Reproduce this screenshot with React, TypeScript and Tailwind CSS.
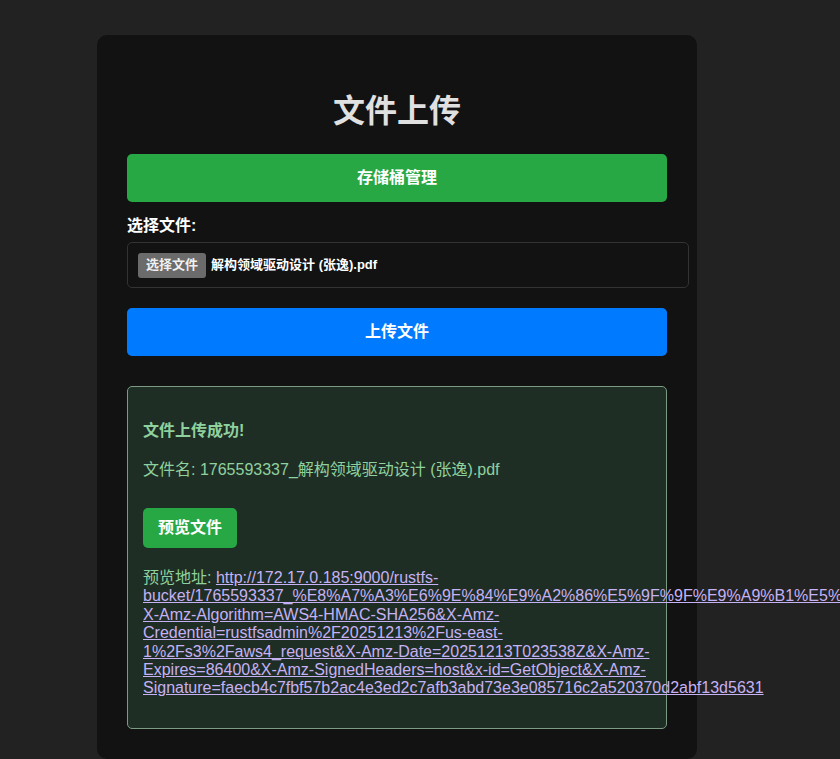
import React from 'react';

const url =
  'http://172.17.0.185:9000/rustfs-bucket/1765593337_%E8%A7%A3%E6%9E%84%E9%A2%86%E5%9F%9F%E9%A9%B1%E5%8A%A8%E8%AE%BE%E8%AE%A1%20%28%E5%BC%A0%E9%80%B8%29.pdf?X-Amz-Algorithm=AWS4-HMAC-SHA256&X-Amz-Credential=rustfsadmin%2F20251213%2Fus-east-1%2Fs3%2Faws4_request&X-Amz-Date=20251213T023538Z&X-Amz-Expires=86400&X-Amz-SignedHeaders=host&x-id=GetObject&X-Amz-Signature=faecb4c7fbf57b2ac4e3ed2c7afb3abd73e3e085716c2a520370d2abf13d5631';

const App: React.FC = () => {
    return (
        <div className="min-h-screen w-full overflow-hidden bg-[#222222] pt-[35px] font-['Liberation_Sans','Noto_Sans_CJK_SC',sans-serif]">
            <div className="ml-[97px] w-[600px] rounded-[10px] bg-[#121212] px-[30px] pt-[30px] pb-[30px]">
                <h1 className="mt-[23px] mb-[20px] text-center text-[32px] font-bold leading-[46px] text-[#e0e0e0]">
                    文件上传
                </h1>

                <button className="block h-[48px] w-full rounded-[5px] bg-[#28a745] text-[16px] font-bold text-white">
                    存储桶管理
                </button>

                <label className="mt-[12px] block text-[16px] font-bold leading-[24px] text-white">
                    选择文件:
                </label>

                <div className="mt-[4px] flex h-[46px] w-[562px] items-center rounded-[5px] border border-[#333333] px-[10px]">
                    <span className="flex h-[25px] items-center rounded-[3px] bg-[#6b6b6b] px-[8px] text-[13px] font-bold text-[#f0f0f0]">
                        选择文件
                    </span>
                    <span className="ml-[5px] text-[13px] font-bold text-white">解构领域驱动设计 (张逸).pdf</span>
                </div>

                <button className="mt-[20px] block h-[48px] w-full rounded-[5px] bg-[#007bff] text-[16px] font-bold text-white">
                    上传文件
                </button>

                <div className="mt-[30px] rounded-[5px] border border-[#7c9b83] bg-[#1f2e25] px-[15px] pt-[32px] pb-[30px] text-[16px] text-[#8fd19e]">
                    <p className="font-semibold leading-[24px]">文件上传成功!</p>
                    <p className="mt-[15px] leading-[24px]">文件名: 1765593337_解构领域驱动设计 (张逸).pdf</p>
                    <button className="mt-[26px] block h-[40px] rounded-[5px] bg-[#28a745] px-[15px] text-[16px] font-bold text-white">
                        预览文件
                    </button>
                    <p className="mt-[21px] leading-[18.4px]">
                        预览地址:{' '}
                        <a href="#" className="text-[#c6b1f4] underline">
                            {url}
                        </a>
                    </p>
                </div>
            </div>
        </div>
    );
};

export default App;
